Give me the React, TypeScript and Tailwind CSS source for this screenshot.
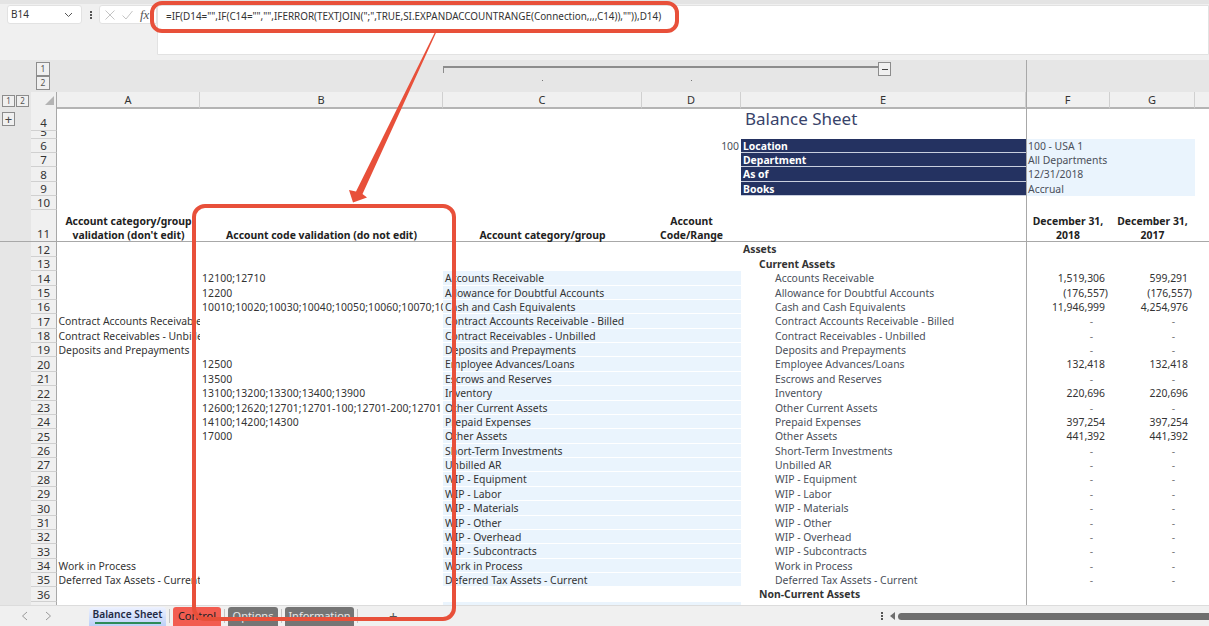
import React from "react";

const font = { fontFamily: '"Noto Sans", Arial, sans-serif' };
const GRID = "grid grid-cols-[31px_26px_143px_243px_199px_99px_285px_84px_85px_14px]";

type R = { n: number; a?: string; b?: string; e: string; f: string; g: string };
const dash = "-";
const rows: R[] = [
  { n: 14, b: "12100;12710", e: "Accounts Receivable", f: "1,519,306", g: "599,291" },
  { n: 15, b: "12200", e: "Allowance for Doubtful Accounts", f: "(176,557)", g: "(176,557)" },
  { n: 16, b: "10010;10020;10030;10040;10050;10060;10070;10080", e: "Cash and Cash Equivalents", f: "11,946,999", g: "4,254,976" },
  { n: 17, a: "Contract Accounts Receivable - Billed", e: "Contract Accounts Receivable - Billed", f: dash, g: dash },
  { n: 18, a: "Contract Receivables - Unbilled", e: "Contract Receivables - Unbilled", f: dash, g: dash },
  { n: 19, a: "Deposits and Prepayments", e: "Deposits and Prepayments", f: dash, g: dash },
  { n: 20, b: "12500", e: "Employee Advances/Loans", f: "132,418", g: "132,418" },
  { n: 21, b: "13500", e: "Escrows and Reserves", f: dash, g: dash },
  { n: 22, b: "13100;13200;13300;13400;13900", e: "Inventory", f: "220,696", g: "220,696" },
  { n: 23, b: "12600;12620;12701;12701-100;12701-200;12701", e: "Other Current Assets", f: dash, g: dash },
  { n: 24, b: "14100;14200;14300", e: "Prepaid Expenses", f: "397,254", g: "397,254" },
  { n: 25, b: "17000", e: "Other Assets", f: "441,392", g: "441,392" },
  { n: 26, e: "Short-Term Investments", f: dash, g: dash },
  { n: 27, e: "Unbilled AR", f: dash, g: dash },
  { n: 28, e: "WIP - Equipment", f: dash, g: dash },
  { n: 29, e: "WIP - Labor", f: dash, g: dash },
  { n: 30, e: "WIP - Materials", f: dash, g: dash },
  { n: 31, e: "WIP - Other", f: dash, g: dash },
  { n: 32, e: "WIP - Overhead", f: dash, g: dash },
  { n: 33, e: "WIP - Subcontracts", f: dash, g: dash },
  { n: 34, a: "Work in Process", e: "Work in Process", f: dash, g: dash },
  { n: 35, a: "Deferred Tax Assets - Current", e: "Deferred Tax Assets - Current", f: dash, g: dash },
];

function Num({ n, className = "h-[14.38px]" }: { n: number; className?: string }) {
  return (
    <>
      <div className="bg-[#e6e6e6]" />
      <div className={`bg-[#f0f0f0] border-b border-b-[#d0d0d0] border-r border-r-[#a8a8a8] flex items-end justify-center text-[11.5px] leading-[13px] font-normal text-[#333] ${className}`}>{n}</div>
    </>
  );
}

function numPad(v: string, col: "f" | "g") {
  if (v === "-") return col === "f" ? "pr-[17px] text-[#777]" : "pr-[20px] text-[#777]";
  if (v.startsWith("(")) return col === "f" ? "pr-[2px]" : "pr-[3px]";
  return col === "f" ? "pr-[5px]" : "pr-[7px]";
}

function Cell({ children, className = "" }: { children?: React.ReactNode; className?: string }) {
  return <div className={`whitespace-nowrap overflow-hidden leading-[13.38px] pt-[1px] ${className}`}>{children}</div>;
}

function InfoRow({ n, label, value, left }: { n: number; label: string; value: string; left?: string }) {
  return (
    <div className={`${GRID} h-[14.38px] text-[10.4px] text-[#4a4f5a]`}>
      <Num n={n} />
      <Cell />
      <Cell />
      <Cell />
      <Cell className="text-right pr-[2px]">{left}</Cell>
      <Cell className="bg-[#243261] text-white font-bold pl-[2px] border-b border-[#c8cede]">{label}</Cell>
      <Cell className="bg-[#eaf4fd] pl-[2px]">{value}</Cell>
      <Cell className="bg-[#eaf4fd]" />
      <Cell />
    </div>
  );
}

function Tab({ label, className }: { label: string; className: string }) {
  return <div className={`h-[19px] rounded-t-[3px] flex items-center justify-center text-[11px] ${className}`}>{label}</div>;
}

export default function App() {
  return (
    <div style={font} className="relative w-[1209px] h-[626px] overflow-hidden bg-white text-[#333]">
      {/* Formula bar */}
      <div className="h-[60px] bg-[#f0f0f0] border-t-[4px] border-[#e4e4e4] flex items-start pt-[1px] pl-[7px]">
        <div className="w-[75px] h-[19px] bg-white rounded-[3px] border border-[#e2e2e2] flex items-center justify-between pl-[3px] pr-[8px] text-[10px] text-[#333]">
          B14
          <svg width="9" height="6" viewBox="0 0 9 6" fill="none" stroke="#555" strokeWidth="1"><path d="M1 1l3.5 3.5L8 1" /></svg>
        </div>
        <div className="w-[17px] h-[19px] flex flex-col items-center justify-center gap-[1px]">
          <span className="w-[2px] h-[2px] bg-[#555]" />
          <span className="w-[2px] h-[2px] bg-[#555]" />
          <span className="w-[2px] h-[2px] bg-[#555]" />
        </div>
        <div className="w-[58px] h-[19px] bg-white rounded-l-[3px] border border-[#e2e2e2] flex items-center pl-[5px] gap-[7px]">
          <svg width="10" height="10" viewBox="0 0 10 10" fill="none" stroke="#c4c4c4" strokeWidth="1"><path d="M0.5 0.5l9 9M9.5 0.5l-9 9" /></svg>
          <svg width="11" height="10" viewBox="0 0 11 10" fill="none" stroke="#c4c4c4" strokeWidth="1"><path d="M0.5 5.5l3.5 3.5 6.5-8" /></svg>
          <span className="italic text-[13px] leading-none text-[#555]" style={{ fontFamily: '"Liberation Serif", serif' }}>fx</span>
        </div>
        <div className="flex-1 h-[50px] bg-white rounded-tl-[3px] border border-[#e2e2e2] pl-[8px] pt-[1px] text-[9.9px] leading-[18px] text-[#333] whitespace-nowrap">
          =IF(D14="",IF(C14="","",IFERROR(TEXTJOIN(";",TRUE,SI.EXPANDACCOUNTRANGE(Connection,,,,C14)),"")),D14)
        </div>
      </div>

      {/* Outline strip */}
      <div className={`${GRID} h-[32px] bg-[#e6e6e6]`}>
        <div />
        <div className="col-span-2 pl-[5px] flex flex-col pt-[2px]">
          <div className="w-[14px] h-[14px] border border-[#8c8c8c] bg-[#f0f0f0] text-[8.5px] leading-[12px] text-center text-[#555]">1</div>
          <div className="w-[14px] h-[14px] border border-[#8c8c8c] bg-[#f0f0f0] text-[8.5px] leading-[12px] text-center text-[#555]">2</div>
        </div>
        <div />
        <div className="col-span-3 relative">
          <div className="h-[7px] mt-[6px] border-t-2 border-l border-[#8c8c8c] w-[438px]" />
          <div className="absolute left-[435px] top-[2px] w-[13px] h-[14px] border border-[#8c8c8c] bg-[#f0f0f0] flex items-center justify-center">
            <span className="w-[6px] h-[1px] bg-[#444]" />
          </div>
          <span className="absolute left-[99px] top-[20px] w-[1px] h-[1px] bg-[#777]" />
          <span className="absolute left-[248px] top-[20px] w-[1px] h-[1px] bg-[#777]" />
        </div>
      </div>

      {/* Column headers */}
      <div className={`${GRID} h-[15px] text-[11px] leading-[15px] text-center text-[#333]`}>
        <div className="bg-[#e6e6e6] pl-[2px] flex items-center gap-[1px]">
          <span className="w-[13px] h-[12px] border border-[#8c8c8c] bg-[#f0f0f0] text-[8px] leading-[10px] text-[#555]">1</span>
          <span className="w-[13px] h-[12px] border border-[#8c8c8c] bg-[#f0f0f0] text-[8px] leading-[10px] text-[#555]">2</span>
        </div>
        <div className="bg-[#f0f0f0] border-r border-r-[#a8a8a8] border-b-2 border-b-[#b4b4b4] flex items-end justify-end pr-[2px] pb-[2px]">
          <svg width="9" height="9" viewBox="0 0 9 9"><path d="M9 0v9H0z" fill="#b4b4b4" /></svg>
        </div>
        {["A", "B", "C", "D", "E", "F", "G"].map((c) => (
          <div key={c} className="bg-[#f0f0f0] border-r border-r-[#d0d0d0] border-b-2 border-b-[#b4b4b4]">{c}</div>
        ))}
        <div className="bg-[#f0f0f0] border-b-2 border-b-[#b4b4b4]" />
      </div>

      {/* Sheet body */}
      <div className="h-[498px] overflow-hidden text-[10.4px] text-[#333]">
        <div className={`${GRID} h-[24px]`}>
          <div className="bg-[#e6e6e6] pl-[2px] pt-[5px]">
            <div className="w-[13px] h-[14px] border border-[#8c8c8c] bg-[#f0f0f0] flex items-center justify-center text-[13px] leading-none text-[#444]">+</div>
          </div>
          <div className="bg-[#f0f0f0] border-r border-r-[#a8a8a8] border-b border-b-[#d0d0d0] flex items-end justify-center text-[11.5px] leading-[14px]">4</div>
          <div className="col-span-4" />
          <div className="flex items-end pl-[4px] text-[17px] leading-[24px] text-[#38436a]">Balance Sheet</div>
        </div>
        <div className={`${GRID} h-[7.6px]`}>
          <div className="bg-[#e6e6e6]" />
          <div className="h-[7.6px] bg-[#f0f0f0] border-b border-b-[#d0d0d0] border-r border-r-[#a8a8a8] flex items-end justify-center overflow-hidden text-[11.5px] leading-[12px]">5</div>
        </div>
        <InfoRow n={6} label="Location" value="100 - USA 1" left="100" />
        <InfoRow n={7} label="Department" value="All Departments" />
        <InfoRow n={8} label="As of" value="12/31/2018" />
        <InfoRow n={9} label="Books" value="Accrual" />
        <div className={`${GRID} h-[14.38px]`}><Num n={10} /></div>

        {/* Header row 11 */}
        <div className={`${GRID} h-[32px] font-bold text-[#222] text-center leading-[14.4px] border-b border-[#a8a8a8]`}>
          <div className="bg-[#e6e6e6]" />
          <div className="bg-[#f0f0f0] border-r border-r-[#a8a8a8] flex items-end justify-center text-[11.5px] leading-[14px] font-normal text-[#333]">11</div>
          <div className="self-end translate-y-[0.5px]">Account category/group<br />validation (don't edit)</div>
          <div className="self-end translate-y-[0.5px]">Account code validation (do not edit)</div>
          <div className="self-end translate-y-[0.5px]">Account category/group</div>
          <div className="self-end translate-y-[0.5px]">Account<br />Code/Range</div>
          <div />
          <div className="self-end translate-y-[0.5px]">December 31,<br />2018</div>
          <div className="self-end translate-y-[0.5px]">December 31,<br />2017</div>
        </div>

        <div className={`${GRID} h-[14.38px] font-bold`}>
          <Num n={12} />
          <div className="col-span-4" />
          <Cell className="pl-[2px]">Assets</Cell>
        </div>
        <div className={`${GRID} h-[14.38px] font-bold`}>
          <Num n={13} />
          <div className="col-span-4" />
          <Cell className="pl-[18px]">Current Assets</Cell>
        </div>

        {rows.map((r) => (
          <div key={r.n} className={`${GRID} h-[14.38px]`}>
            <Num n={r.n} />
            <Cell className="pl-[1.5px]">{r.a}</Cell>
            <Cell className="pl-[2px] tracking-[0.12px]">{r.b}</Cell>
            <Cell className="bg-[#eaf4fd] pl-[2px] border-b border-white">{r.e}</Cell>
            <Cell className="bg-[#eaf4fd] border-b border-white" />
            <Cell className="pl-[34px] text-[#4a4f5a]">{r.e}</Cell>
            <Cell className={`text-right ${numPad(r.f, "f")}`}>{r.f}</Cell>
            <Cell className={`text-right ${numPad(r.g, "g")}`}>{r.g}</Cell>
          </div>
        ))}

        <div className={`${GRID} h-[14.38px] font-bold`}>
          <Num n={36} />
          <div className="col-span-4" />
          <Cell className="pl-[18px]">Non-Current Assets</Cell>
        </div>
        <div className={`${GRID} h-[14.38px]`}>
          <div className="bg-[#e6e6e6]" />
          <div className="bg-[#f0f0f0] border-r border-r-[#a8a8a8]" />
          <div />
          <div />
          <div className="bg-[#eaf4fd]" />
          <div className="bg-[#eaf4fd]" />
        </div>
      </div>

      {/* Bottom tabs */}
      <div className="h-[21px] bg-[#f0f0f0] border-t border-[#dcdcdc] flex items-center">
        <div className="w-[89px] flex items-center pl-[21px] gap-[17px]">
          <svg width="7" height="10" viewBox="0 0 7 10" fill="none" stroke="#999" strokeWidth="1"><path d="M6 1L1.5 5 6 9" /></svg>
          <svg width="7" height="10" viewBox="0 0 7 10" fill="none" stroke="#999" strokeWidth="1"><path d="M1 1l4.5 4L1 9" /></svg>
        </div>
        <div className="w-[77px] h-[19px] rounded-t-[3px] bg-gradient-to-b from-[#eef2ff] to-[#bcd0f8] flex flex-col items-center text-[10.2px] font-semibold text-[#1f2a44] leading-[15px]">
          Balance Sheet
          <span className="w-[66px] h-[2px] bg-[#2e8b57]" />
        </div>
        <span className="w-[1px] h-[14px] bg-[#c4c4c4] mx-[3px]" />
        <Tab label="Control" className="w-[48px] bg-[#f25c50] text-[#222]" />
        <span className="w-[1px] h-[14px] bg-[#c4c4c4] mx-[3px]" />
        <Tab label="Options" className="w-[50px] bg-[#757575] text-[#e8e8e8]" />
        <span className="w-[1px] h-[14px] bg-[#c4c4c4] mx-[3px]" />
        <Tab label="Information" className="w-[69px] bg-[#757575] text-[#e8e8e8]" />
        <span className="w-[1px] h-[14px] bg-[#c4c4c4] ml-[3px]" />
        <span className="ml-[31px] text-[15px] leading-none text-[#555]">+</span>
        <div className="ml-auto w-[17px] flex flex-col items-center gap-[1px]">
          <span className="w-[2px] h-[2px] bg-[#555]" />
          <span className="w-[2px] h-[2px] bg-[#555]" />
          <span className="w-[2px] h-[2px] bg-[#555]" />
        </div>
        <div className="w-[319px] h-[8px] flex items-center">
          <svg width="6" height="8" viewBox="0 0 6 8" className="mr-[2px]"><path d="M5 0v8L0 4z" fill="#6e6e6e" /></svg>
          <div className="flex-1 h-[7px] bg-[#6e6e6e] rounded-l-[4px]" />
        </div>
      </div>

      {/* Freeze pane line */}
      <div className="absolute left-[1026px] top-[60px] w-[1px] h-[545px] bg-[#a8a8a8]" />

      {/* Annotation overlay */}
      <svg className="absolute left-0 top-0 pointer-events-none" width="1209" height="626" fill="none">
        <rect x="152" y="3" width="525" height="28" rx="10" stroke="#e8503a" strokeWidth="4" />
        <rect x="194" y="206" width="260" height="413" rx="11" stroke="#e8503a" strokeWidth="4" />
        <path d="M436.5 29L437.5 29.5L362.5 194L367 197.5L353 202.5L349 190L356 191.5Z" fill="#e8503a" />
      </svg>
    </div>
  );
}
